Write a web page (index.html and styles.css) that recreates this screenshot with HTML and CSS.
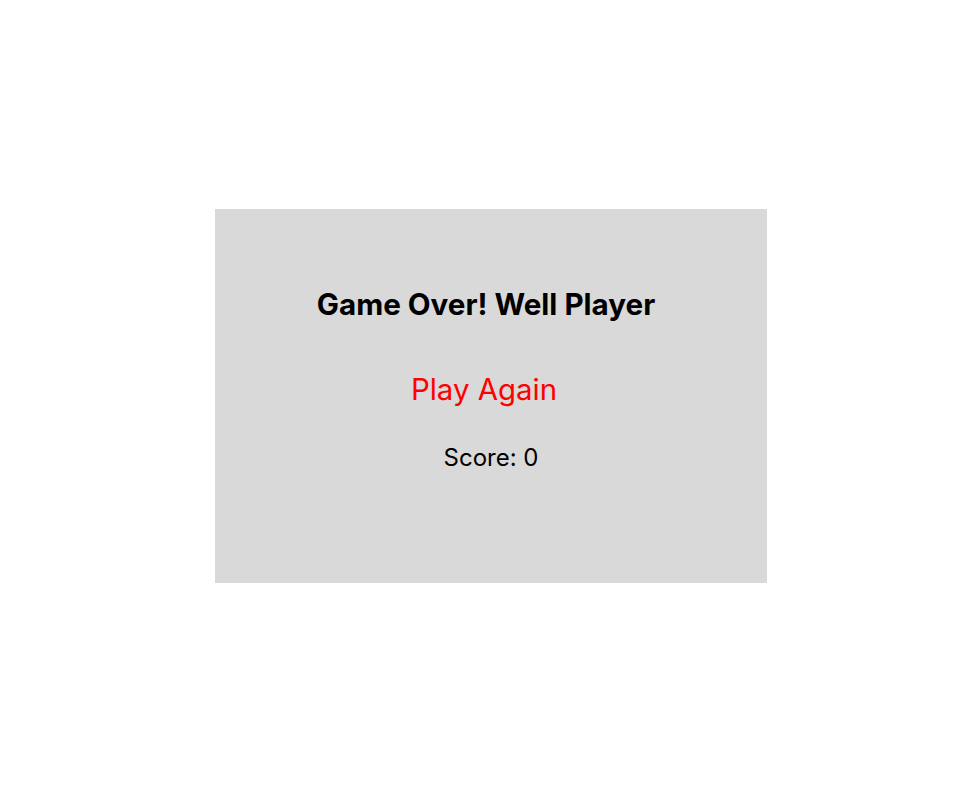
FILE: index.html
```html
<!DOCTYPE html>
<html>
<head>
<meta charset="utf-8">
<link rel="stylesheet" href="styles.css">
</head>
<body>
<div class="page">
  <div class="card">
    <h1 class="title">Game Over! Well Player</h1>
    <div class="again">Play Again</div>
    <div class="score">Score: 0</div>
  </div>
</div>
</body>
</html>
```
FILE: styles.css
```css
html, body { margin: 0; padding: 0; background: #fff; }
body { font-family: Inter, "Noto Sans", sans-serif; }
.page {
  width: 979px; height: 789px;
  display: flex; align-items: flex-start; justify-content: flex-start;
  box-sizing: border-box; padding: 209px 0 0 215px;
}
.card {
  width: 552px; height: 374px; background: #d9d9d9;
  display: flex; flex-direction: column; align-items: center;
  box-sizing: border-box; padding-top: 81.3px;
}
.title { margin: 0 10px 0 0; font-size: 29.6px; font-weight: 700; color: #000; line-height: 1; }
.again { margin: 55px 14px 0 0; font-size: 29.4px; color: #ff0000; line-height: 1; }
.score { margin-top: 41.4px; font-size: 24px; color: #000; line-height: 1; }
```
